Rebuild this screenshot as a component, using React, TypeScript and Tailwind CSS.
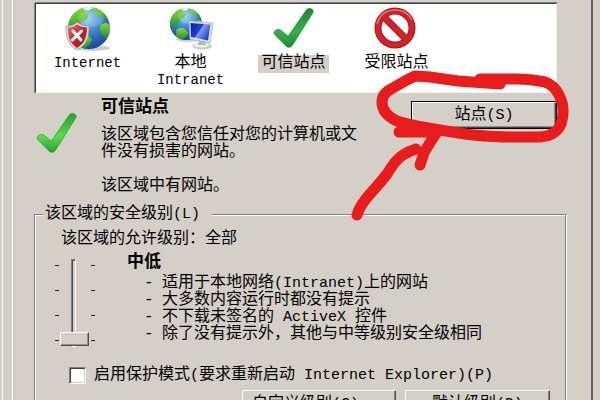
import React from "react";

const bulletLines: React.ReactNode[] = [
  <>适用于本地网络<Latin>(Intranet)</Latin>上的网站</>,
  <>大多数内容运行时都没有提示</>,
  <>不下载未签名的<Latin>&nbsp;ActiveX&nbsp;</Latin>控件</>,
  <>除了没有提示外，其他与中等级别安全级相同</>,
];

function Latin({ children }: { children: React.ReactNode }) {
  return <span className="text-[15px]">{children}</span>;
}

function Globe({ id, cx, cy, r }: { id: string; cx: number; cy: number; r: number }) {
  return (
    <g>
      <defs>
        <radialGradient id={`${id}-sea`} cx="0.45" cy="0.25" r="0.8">
          <stop offset="0" stopColor="#8fd0f5" />
          <stop offset="0.45" stopColor="#3a86cf" />
          <stop offset="1" stopColor="#123f94" />
        </radialGradient>
        <linearGradient id={`${id}-land`} x1="0" y1="0" x2="0" y2="1">
          <stop offset="0" stopColor="#8ada3a" />
          <stop offset="1" stopColor="#1f8a2c" />
        </linearGradient>
        <clipPath id={`${id}-clip`}>
          <circle cx={cx} cy={cy} r={r} />
        </clipPath>
      </defs>
      <ellipse cx={cx + 3} cy={cy + r - 1} rx={r - 3} ry="3" fill="#b9b9b9" opacity="0.7" />
      <circle cx={cx} cy={cy} r={r} fill={`url(#${id}-sea)`} />
      <g clipPath={`url(#${id}-clip)`}>
        <g transform={`translate(${cx} ${cy}) scale(${r / 20})`} fill={`url(#${id}-land)`}>
          <path d="M-21 -2c1-9 8-16 15-17l4 1-1 4 3 1-2 5-5 2-2 5-5 1-2 5-5 1z" />
          <path d="M4-20c8 1 13 6 16 14l-4-1-2-4-5 0-3-4-4-1z" />
          <path d="M11-3l5-2 5 3-1 8-4 4-3-3-3-5z" />
          <path d="M-12 7c4-3 10-3 12 1l3 3-3 5-4 4-8-3z" />
          <path d="M-6-20l6-1 4 2-4 2-4 0z" fill="#f1fbff" />
        </g>
        <ellipse cx={cx + r * 0.1} cy={cy - r * 0.45} rx={r * 0.6} ry={r * 0.4} fill="#fff" opacity="0.18" />
      </g>
    </g>
  );
}

function InternetIcon() {
  return (
    <svg width="46" height="46" viewBox="0 0 46 46" aria-hidden="true">
      <defs>
        <linearGradient id="shield" x1="0" y1="0" x2="1" y2="1">
          <stop offset="0" stopColor="#e57676" />
          <stop offset="0.5" stopColor="#c3252a" />
          <stop offset="1" stopColor="#93151a" />
        </linearGradient>
      </defs>
      <Globe id="net" cx={24} cy={22} r={21} />
      <path d="M1 20c5 0 8-1 11-4 4 3 7 4 12 4 0 12-2 19-12 24C3 39 1 32 1 20z" fill="#d8d4d4" stroke="#9c9494" strokeWidth="0.7" />
      <path d="M3 21.500c4 0 7-1 9-3 3 2 6 3 10 3-0.500 10-2 15.500-10 20.500-7-5-9-10.500-9-20.500z" fill="url(#shield)" />
      <path d="M8 25l8 9M16.500 25l-9 9" stroke="#fff" strokeWidth="3" strokeLinecap="round" />
    </svg>
  );
}

function IntranetIcon() {
  return (
    <svg width="46" height="46" viewBox="0 0 46 46" aria-hidden="true">
      <defs>
        <linearGradient id="screen" x1="0" y1="0" x2="1" y2="0.6">
          <stop offset="0" stopColor="#0a1fa8" />
          <stop offset="0.5" stopColor="#1f3ed4" />
          <stop offset="0.55" stopColor="#7f9cf4" />
          <stop offset="1" stopColor="#2445cf" />
        </linearGradient>
      </defs>
      <Globe id="intra" cx={18} cy={18} r={16} />
      <ellipse cx="34" cy="40" rx="10" ry="3.500" fill="#c9cccd" />
      <ellipse cx="33" cy="39" rx="8" ry="2.500" fill="#eceeee" />
      <path d="M31 33l6 1 1 5h-8z" fill="#b4b8ba" />
      <path d="M21 15l24 2-3 20-20-4z" fill="#dfe3e6" stroke="#a9adb0" strokeWidth="0.8" />
      <path d="M22.500 17l20 1.500-2.500 16-17-3.500z" fill="url(#screen)" />
    </svg>
  );
}

function CheckIcon({ id, from, to, size }: { id: string; from: string; to: string; size: number }) {
  return (
    <svg width={size} height={size} viewBox="0 0 46 46" aria-hidden="true">
      <defs>
        <linearGradient id={id} x1="0" y1="0" x2="0" y2="1">
          <stop offset="0" stopColor={to} />
          <stop offset="0.6" stopColor={from} />
          <stop offset="1" stopColor={to} />
        </linearGradient>
      </defs>
      <path
        d="M2.500 27c2-3 5-3 7-1.500l7.500 6L36 4c2-3 8-1 7 2.500L22 40c-2 4-6 4-8 1L3 30c-1-1-1-2-0.500-3z"
        fill={`url(#${id})`}
        stroke={to}
        strokeWidth="0.8"
      />
    </svg>
  );
}

function ForbiddenIcon() {
  return (
    <svg width="46" height="46" viewBox="0 0 46 46" aria-hidden="true">
      <g fill="none">
        <circle cx="21" cy="22" r="17" stroke="#a8141b" strokeWidth="7" />
        <path d="M9 10l24 24" stroke="#a8141b" strokeWidth="7" />
        <circle cx="21" cy="22" r="17" stroke="#d3222a" strokeWidth="5" />
        <path d="M9 10l24 24" stroke="#d3222a" strokeWidth="5" />
        <path d="M3 18c2-9 9-14 18-14 8 0 14 4 17 10" stroke="#ee8a8c" strokeWidth="1.500" opacity="0.8" />
      </g>
    </svg>
  );
}

function Zone({ icon, children, selected }: { icon: React.ReactNode; children: React.ReactNode; selected?: boolean }) {
  return (
    <li className="flex w-[103px] flex-col items-center text-center">
      <span className="flex h-[46px] items-start">{icon}</span>
      <span className={selected ? "mt-[3px] bg-[#d4d0c8] px-[3px] pb-px" : "mt-[3px] px-[3px]"}>{children}</span>
    </li>
  );
}

const ticks = [0, 1, 2, 3];

function Ticks() {
  return (
    <div className="flex h-[76px] flex-col justify-between">
      {ticks.map((t) => (
        <span key={t} className="h-px w-1 bg-[#222]" />
      ))}
    </div>
  );
}

function LevelSlider() {
  return (
    <div className="flex w-10">
      <div className="pt-1.5"><Ticks /></div>
      <input
        type="range"
        min={0}
        max={3}
        defaultValue={3}
        aria-label="该区域的安全级别"
        className="mr-auto ml-px h-[88px] w-[26px] shrink-0 appearance-none bg-transparent [writing-mode:vertical-lr] [&::-webkit-slider-runnable-track]:w-[5px] [&::-webkit-slider-runnable-track]:border [&::-webkit-slider-runnable-track]:border-t-[#808080] [&::-webkit-slider-runnable-track]:border-r-white [&::-webkit-slider-runnable-track]:border-b-white [&::-webkit-slider-runnable-track]:border-l-[#808080] [&::-webkit-slider-runnable-track]:shadow-[inset_1px_1px_0_#505050] [&::-webkit-slider-thumb]:-ml-3 [&::-webkit-slider-thumb]:h-[14px] [&::-webkit-slider-thumb]:w-[29px] [&::-webkit-slider-thumb]:appearance-none [&::-webkit-slider-thumb]:border [&::-webkit-slider-thumb]:border-t-white [&::-webkit-slider-thumb]:border-r-[#505050] [&::-webkit-slider-thumb]:border-b-[#505050] [&::-webkit-slider-thumb]:border-l-white [&::-webkit-slider-thumb]:bg-[#d4d0c8] [&::-webkit-slider-thumb]:shadow-[inset_-1px_-1px_0_#909090]"
      />
      <div className="pt-1.5"><Ticks /></div>
    </div>
  );
}

const raised =
  "h-7 border border-t-white border-r-[#505050] border-b-[#505050] border-l-white bg-[#d4d0c8] shadow-[inset_-1px_-1px_0_#808080]";

function Annotation() {
  return (
    <svg
      className="pointer-events-none absolute top-0 left-0"
      width="600"
      height="400"
      viewBox="0 0 600 400"
      fill="none"
      stroke="#e81c1c"
      strokeWidth="11"
      strokeLinecap="round"
      strokeLinejoin="round"
      aria-hidden="true"
    >
      <path d="M500 84L458 81L430 77L415 76L405 81L393 88Q382 93 382 102Q382 114 397 121Q408 125 440 130Q463 134 473 135Q495 137 510 137H540Q556 136 561 124Q566 108 559 95Q554 85 545 82Q530 79 517 79H480" />
      <path d="M399 132H437Q427 147 424 153L420 165" />
      <path d="M357 215Q360 205 370 194Q380 183 387 174Q396 159 403 155Q409 151 416 149" />
    </svg>
  );
}

export default function App() {
  return (
    <div className="relative flex h-screen overflow-hidden bg-[#d4d0c8] pl-[2px] text-[16px] leading-[17px] text-black [font-family:'Liberation_Mono','Noto_Sans_CJK_SC',monospace]">
      <div className="flex min-w-0 flex-1 border-l border-white pl-[9px]">
        <main className="mr-[7px] min-w-0 flex-1 border-r-2 border-l border-r-[#636363] border-l-white pt-[3px] pr-[25px] pl-[21px]">
          <ul className="mr-[9px] ml-px flex h-[90px] border border-t-[#404040] border-r-[#f4f2ee] border-b-[#f4f2ee] border-l-[#404040] bg-white pt-[2px] shadow-[0_-1px_0_#808080,-1px_0_0_#808080]">
            <Zone icon={<InternetIcon />}><span className="text-[14px]">Internet</span></Zone>
            <Zone icon={<IntranetIcon />}>本地<br /><span className="text-[14px]">Intranet</span></Zone>
            <Zone selected icon={<CheckIcon id="zone-check" from="#36b04a" to="#1d8a36" size={44} />}>可信站点</Zone>
            <Zone icon={<ForbiddenIcon />}>受限站点</Zone>
          </ul>

          <section className="mr-[9px] ml-px flex items-start">
            <div className="w-[66px] shrink-0 pt-[18px]">
              <CheckIcon id="section-check" from="#55dd50" to="#27a02e" size={44} />
            </div>
            <div className="min-w-0 flex-1 pt-1.5">
              <h2 className="text-[17px] font-bold">可信站点</h2>
              <p className="mt-[11px] whitespace-nowrap">该区域包含您信任对您的计算机或文<br />件没有损害的网站。</p>
              <p className="mt-[17px]">该区域中有网站。</p>
            </div>
            <button
              type="button"
              className="mt-2 h-7 w-[146px] shrink-0 border border-black bg-[#d4d0c8] shadow-[inset_1px_1px_0_#fff,inset_-1px_-1px_0_#404040,inset_-2px_-2px_0_#909090]"
            >
              站点<Latin>(S)</Latin>
            </button>
          </section>

          <fieldset className="mt-[11px] min-w-0 border border-[#808080] px-2 shadow-[inset_1px_1px_0_#fff,1px_1px_0_#fff]">
            <legend className="bg-[#d4d0c8] pr-3 pl-[2px]">该区域的安全级别<Latin>(L)</Latin></legend>
            <p className="pt-2 pl-[18px]">该区域的允许级别：全部</p>
            <div className="flex pt-[5px] pl-3">
              <div className="pt-1.5"><LevelSlider /></div>
              <div className="pt-px pl-8">
                <h3 className="text-[17px] font-bold">中低</h3>
                <ul className="mt-1 pl-[17px]">
                  {bulletLines.map((line, i) => (
                    <li key={i} className="flex">
                      <span className="w-[18px] shrink-0">-</span>
                      <span className="whitespace-nowrap">{line}</span>
                    </li>
                  ))}
                </ul>
              </div>
            </div>
            <label className="mt-[19px] ml-[26px] flex items-center gap-2 whitespace-nowrap">
              <input
                type="checkbox"
                className="h-[17px] w-[17px] appearance-none border border-t-[#808080] border-r-white border-b-white border-l-[#808080] bg-white shadow-[inset_1px_1px_0_#404040,inset_-1px_-1px_0_#d4d0c8]"
              />
              <span className="pt-px">启用保护模式<Latin>(</Latin>要求重新启动<Latin>&nbsp;Internet Explorer)(P)</Latin></span>
            </label>
            <div className="mt-1.5 flex justify-end gap-[9px] pr-[7px] pb-3">
              <button type="button" className={`${raised} w-[154px]`}>自定义级别<Latin>(C)...</Latin></button>
              <button type="button" className={`${raised} w-[145px]`}>默认级别<Latin>(D)</Latin></button>
            </div>
          </fieldset>
        </main>
      </div>
      <Annotation />
    </div>
  );
}
